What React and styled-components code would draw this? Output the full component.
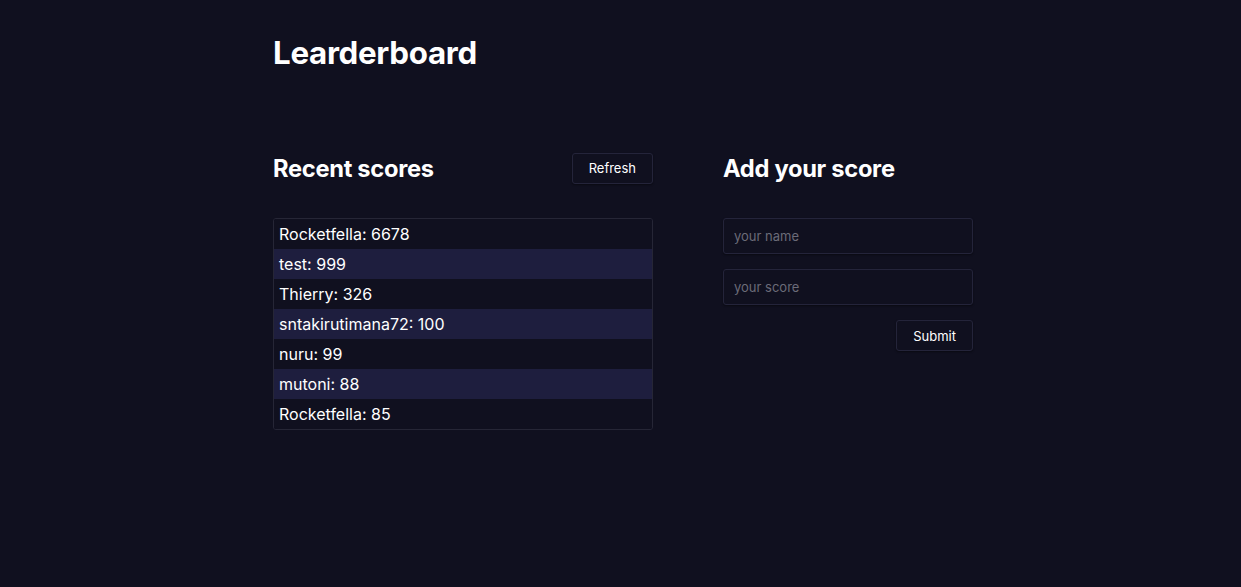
import React from "react";
import styled, { createGlobalStyle } from "styled-components";

const GlobalStyle = createGlobalStyle`
  html, body {
    margin: 0;
    padding: 0;
    background: #10101f;
    color: #fff;
    font-family: Inter, "Noto Sans", sans-serif;
  }
`;

const Page = styled.div`
  min-height: 587px;
  padding-left: 5px;
  background: #10101f;
`;

const Main = styled.main`
  width: 700px;
  margin: 0 auto;
  padding-top: 31px;
`;

const Title = styled.h1`
  margin: 0;
  font-size: 31.3px;
  font-weight: 700;
  line-height: 44px;
  letter-spacing: -0.3px;
`;

const Columns = styled.div`
  display: flex;
  gap: 70px;
  margin-top: 77px;
`;

const Column = styled.section`
  width: ${({ w }) => w}px;
  display: flex;
  flex-direction: column;
`;

const Header = styled.div`
  display: flex;
  align-items: center;
  justify-content: space-between;
  height: 32px;
  margin-bottom: 34px;
`;

const Heading = styled.h2`
  margin: 0;
  font-size: 23.7px;
  font-weight: 700;
  letter-spacing: -0.3px;
`;

const Button = styled.button`
  font-family: Inter, "Noto Sans", sans-serif;
  font-size: 13px;
  color: #fff;
  background: #10101f;
  border: 1px solid #24243a;
  border-radius: 3px;
  box-shadow: 0 1px 2px rgba(0, 0, 0, 0.4);
  height: 31px;
  padding: 0 16px;
  align-self: ${({ right }) => (right ? "flex-end" : "auto")};
`;

const List = styled.ul`
  list-style: none;
  margin: 0;
  padding: 0;
  border: 1px solid #262636;
  border-radius: 3px;
  overflow: hidden;
`;

const Row = styled.li`
  height: 30px;
  line-height: 30px;
  padding-left: 5px;
  font-size: 16px;
  background: ${({ odd }) => (odd ? "#1e1e3e" : "#10101f")};
`;

const Form = styled.form`
  display: flex;
  flex-direction: column;
  gap: 15px;
`;

const Input = styled.input`
  box-sizing: border-box;
  width: 100%;
  height: 36px;
  padding: 0 10px;
  font-family: Inter, "Noto Sans", sans-serif;
  font-size: 13px;
  color: #fff;
  background: #10101f;
  border: 1px solid #24243a;
  border-radius: 3px;
  box-shadow: 0 1px 2px rgba(0, 0, 0, 0.4);
  outline: none;
  &::placeholder {
    color: #6b6b78;
  }
`;

const scores = [
  ["Rocketfella", 6678],
  ["test", 999],
  ["Thierry", 326],
  ["sntakirutimana72", 100],
  ["nuru", 99],
  ["mutoni", 88],
  ["Rocketfella", 85],
];

export default function App() {
  return (
    <Page>
      <GlobalStyle />
      <Main>
        <Title>Learderboard</Title>
        <Columns>
          <Column w={380}>
            <Header>
              <Heading>Recent scores</Heading>
              <Button>Refresh</Button>
            </Header>
            <List>
              {scores.map(([name, score], i) => (
                <Row key={i} odd={i % 2 === 1}>
                  {name}: {score}
                </Row>
              ))}
            </List>
          </Column>
          <Column w={250}>
            <Header>
              <Heading>Add your score</Heading>
            </Header>
            <Form onSubmit={(e) => e.preventDefault()}>
              <Input placeholder="your name" />
              <Input placeholder="your score" />
              <Button right type="submit">Submit</Button>
            </Form>
          </Column>
        </Columns>
      </Main>
    </Page>
  );
}
